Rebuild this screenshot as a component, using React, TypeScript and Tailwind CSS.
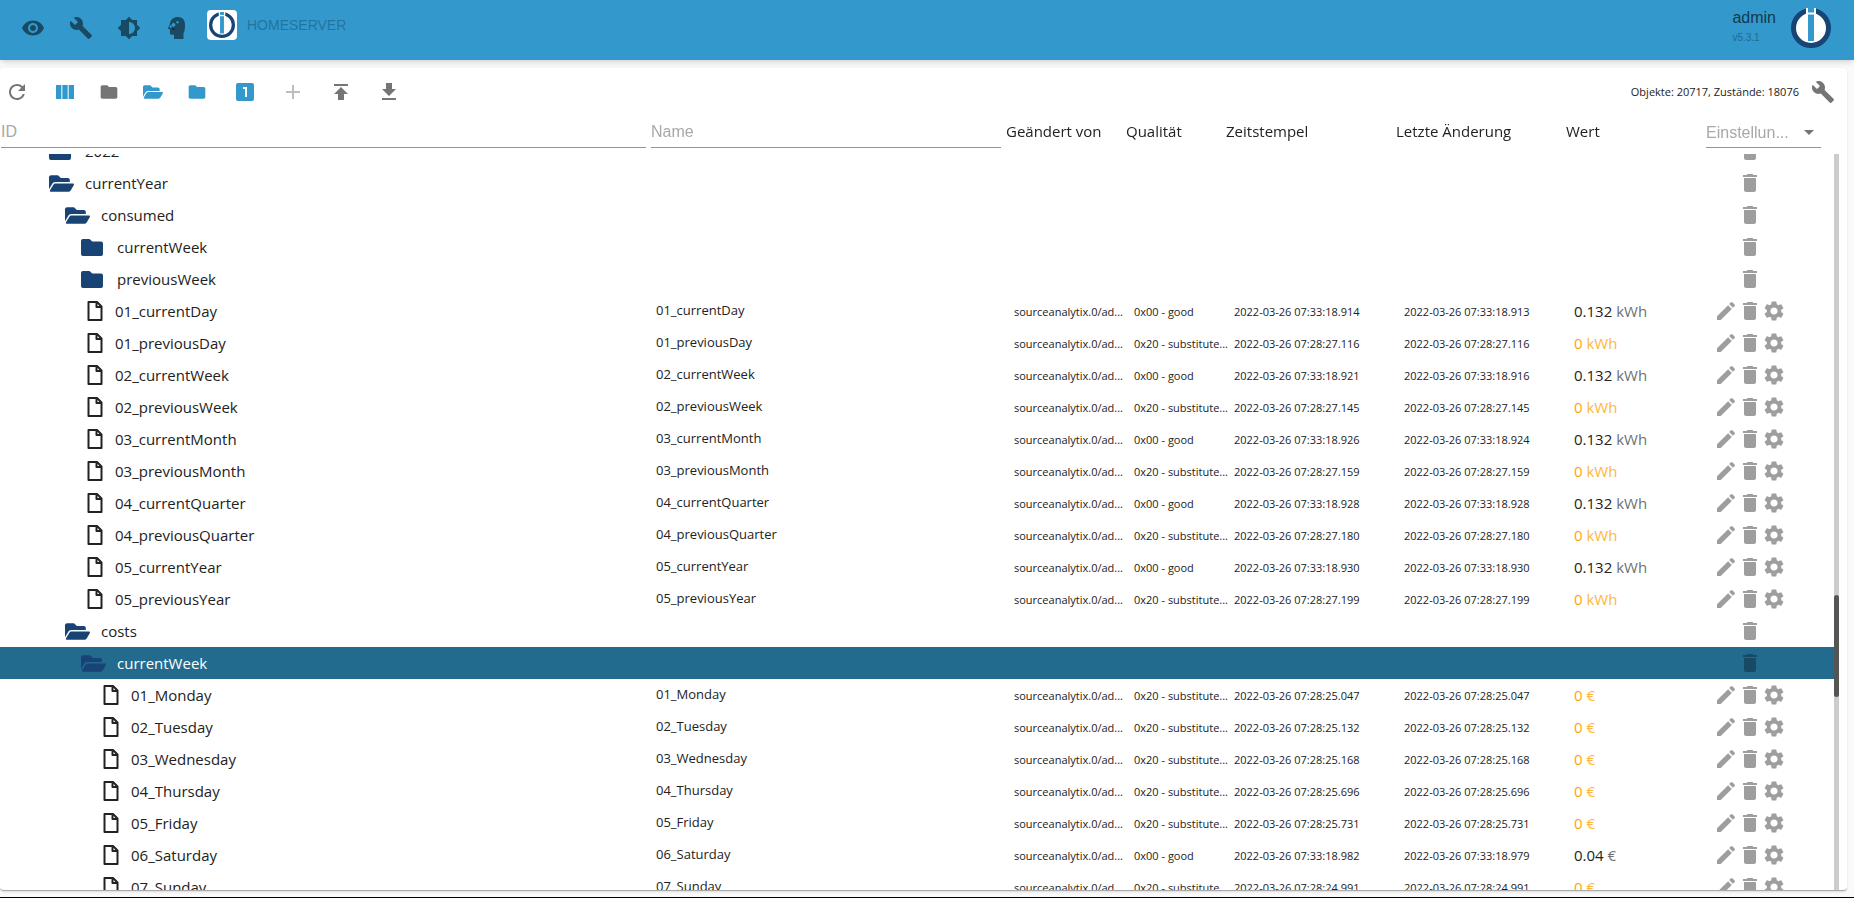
import { useLayoutEffect, useRef } from "react";
import {
  MdAdd,
  MdArrowDropDown,
  MdBrightness6,
  MdBuild,
  MdDelete,
  MdEdit,
  MdFolder,
  MdGetApp,
  MdLooksOne,
  MdPublish,
  MdRefresh,
  MdSettings,
  MdViewColumn,
  MdVisibility,
} from "react-icons/md";
import { FaFolderOpen } from "react-icons/fa";

type Row = {
  name: string;
  depth: number;
  kind: "open" | "closed" | "state";
  quality?: string;
  ts?: string;
  lc?: string;
  value?: string;
  unit?: string;
  selected?: boolean;
};

const open = (name: string, depth: number, selected = false): Row => ({ name, depth, kind: "open", selected });
const closed = (name: string, depth: number): Row => ({ name, depth, kind: "closed" });
const state = (name: string, depth: number, ts: string, lc: string, value: string, unit: string): Row => ({
  name,
  depth,
  kind: "state",
  quality: value === "0" ? "0x20 - substitute..." : "0x00 - good",
  ts: `2022-03-26 07:${ts}`,
  lc: `2022-03-26 07:${lc}`,
  value,
  unit,
});

const rows: Row[] = [
  closed("2022", 0),
  open("currentYear", 0),
  open("consumed", 1),
  closed("currentWeek", 2),
  closed("previousWeek", 2),
  state("01_currentDay", 2, "33:18.914", "33:18.913", "0.132", "kWh"),
  state("01_previousDay", 2, "28:27.116", "28:27.116", "0", "kWh"),
  state("02_currentWeek", 2, "33:18.921", "33:18.916", "0.132", "kWh"),
  state("02_previousWeek", 2, "28:27.145", "28:27.145", "0", "kWh"),
  state("03_currentMonth", 2, "33:18.926", "33:18.924", "0.132", "kWh"),
  state("03_previousMonth", 2, "28:27.159", "28:27.159", "0", "kWh"),
  state("04_currentQuarter", 2, "33:18.928", "33:18.928", "0.132", "kWh"),
  state("04_previousQuarter", 2, "28:27.180", "28:27.180", "0", "kWh"),
  state("05_currentYear", 2, "33:18.930", "33:18.930", "0.132", "kWh"),
  state("05_previousYear", 2, "28:27.199", "28:27.199", "0", "kWh"),
  open("costs", 1),
  open("currentWeek", 2, true),
  state("01_Monday", 3, "28:25.047", "28:25.047", "0", "€"),
  state("02_Tuesday", 3, "28:25.132", "28:25.132", "0", "€"),
  state("03_Wednesday", 3, "28:25.168", "28:25.168", "0", "€"),
  state("04_Thursday", 3, "28:25.696", "28:25.696", "0", "€"),
  state("05_Friday", 3, "28:25.731", "28:25.731", "0", "€"),
  state("06_Saturday", 3, "33:18.982", "33:18.979", "0.04", "€"),
  state("07_Sunday", 3, "28:24.991", "28:24.991", "0", "€"),
];

const indent = ["pl-[49px]", "pl-[65px]", "pl-[81px]", "pl-[97px]"];

function Logo({ className }: { className: string }) {
  return (
    <svg viewBox="0 0 40 40" className={className} aria-hidden>
      <circle cx="20" cy="20" r="17.5" fill="#fff" stroke="#174475" strokeWidth="5" />
      <rect x="15" y="0" width="10" height="34" fill="#fff" />
      <rect x="17" y="0" width="6" height="4.5" fill="#3399cc" />
      <rect x="17" y="6.5" width="6" height="26.5" fill="#3399cc" />
    </svg>
  );
}

function ExpertIcon() {
  return (
    <svg viewBox="0 0 24 24" className="size-6" fill="currentColor" aria-hidden>
      <path d="M13 1C8.500 1 5.500 3.500 5 7.500L3.200 12c-.3.800 0 1.200.8 1.200h1V17c0 1.200.6 1.800 1.800 1.800H9V23h9.500v-6c1.200-1.500 1.500-4 1.500-8.500C20 4 17.500 1 13 1z" />
      <g fill="#3399cc">
        <circle cx="8.500" cy="8.800" r="1.900" />
        <circle cx="12.500" cy="6.200" r="1.200" />
        <circle cx="5.800" cy="10.500" r="1.200" />
      </g>
      <circle cx="8.500" cy="13" r="1" fill="#0b2a3a" />
    </svg>
  );
}

function FileIcon() {
  return (
    <svg viewBox="0 0 16 20" className="h-5 w-4" fill="none" stroke="#222" strokeWidth="2" strokeLinejoin="round" aria-hidden>
      <path d="M1.500 1H10l4.500 4.500V19h-13z" />
      <path d="M9.500 1v5h5" />
    </svg>
  );
}

function RowIcon({ row }: { row: Row }) {
  if (row.kind === "state") return <FileIcon />;
  if (row.kind === "open") return <FaFolderOpen className="size-[25px]" color="#174475" />;
  return (
    <svg viewBox="0 0 22 17" className="h-[17px] w-[22px]" fill="#174475" aria-hidden>
      <path d="M2 0h6.500l2.800 2.500H20a2 2 0 0 1 2 2V15a2 2 0 0 1-2 2H2a2 2 0 0 1-2-2V2a2 2 0 0 1 2-2z" />
    </svg>
  );
}

const headers = ["Geändert von", "Qualität", "Zeitstempel", "Letzte Änderung", "Wert"];

export default function App() {
  const listRef = useRef<HTMLDivElement>(null);

  useLayoutEffect(() => {
    if (listRef.current) listRef.current.scrollTop = 19;
  }, []);

  return (
    <div className="flex h-screen flex-col border-b border-black bg-[#fafafa] font-['Open_Sans',sans-serif] text-[#222]">
      {/* App bar */}
      <header className="z-20 flex h-15 shrink-0 items-center bg-[#3399cc] pr-[23px] pb-1 pl-[21px] font-['Liberation_Sans',sans-serif] text-[#184a63] shadow-md">
        <nav className="flex items-center gap-6">
          <button aria-label="Sichtbarkeit"><MdVisibility className="size-6" /></button>
          <button aria-label="Einstellungen"><MdBuild className="size-6" /></button>
          <button aria-label="Farbschema"><MdBrightness6 className="size-6" /></button>
          <button aria-label="Expertenmodus"><ExpertIcon /></button>
        </nav>
        <div className="mb-1.5 ml-[18px] flex items-center gap-2.5">
          <span className="rounded-sm bg-white p-0.5">
            <Logo className="size-[26px]" />
          </span>
          <span className="text-sm text-[#2474a0]">HOMESERVER</span>
        </div>
        <div className="ml-auto flex items-center gap-[15px]">
          <div>
            <p className="text-base leading-5 text-[#123a4e]">admin</p>
            <p className="text-[10px] leading-5 text-[#1d6a93]">v5.3.1</p>
          </div>
          <Logo className="size-10" />
        </div>
      </header>

      <main className="mt-2 mr-[7px] mb-[6px] flex min-h-0 flex-1 flex-col rounded border-b border-[#aaa] bg-white shadow-sm">
        {/* Toolbar */}
        <div className="flex h-12 shrink-0 items-center px-[5px] text-[#757575]">
          <button aria-label="Aktualisieren" className="mr-6"><MdRefresh className="size-6" /></button>
          <button aria-label="Spalten" className="mr-[22px] text-[#3399cc]"><MdViewColumn className="size-6" /></button>
          <button aria-label="Alle zuklappen" className="mr-6"><MdFolder className="size-5" /></button>
          <button aria-label="Alle aufklappen" className="mr-6 text-[#3399cc]"><FaFolderOpen className="size-5" /></button>
          <button aria-label="Ordner" className="mr-[26px] text-[#3399cc]"><MdFolder className="size-5" /></button>
          <button aria-label="Nur Zustände" className="mr-6 text-[#3399cc]"><MdLooksOne className="size-6" /></button>
          <button aria-label="Hinzufügen" className="mr-6 text-[#bdbdbd]"><MdAdd className="size-6" /></button>
          <button aria-label="Importieren" className="mr-6"><MdPublish className="size-6" /></button>
          <button aria-label="Exportieren"><MdGetApp className="size-6" /></button>
          <p className="mr-3 ml-auto text-[11px] text-[#222]">Objekte: 20717, Zustände: 18076</p>
          <button aria-label="Werkzeuge" className="mr-[7px]"><MdBuild className="size-6" /></button>
        </div>

        {/* Object tree */}
        <div className="flex min-h-0 flex-1">
          <div ref={listRef} className="min-w-0 flex-1 overflow-y-auto [scrollbar-width:none]">
            <table className="w-full table-fixed border-collapse text-left">
              <colgroup>
                <col />
                <col className="w-[355px]" />
                <col className="w-[120px]" />
                <col className="w-[100px]" />
                <col className="w-[170px]" />
                <col className="w-[170px]" />
                <col className="w-[140px]" />
                <col className="w-[128px]" />
              </colgroup>
              <thead className="sticky top-0 z-10 bg-white text-[15px]">
                <tr className="h-[38px]">
                  <th className="pt-0 pr-[5px] pb-1.5 pl-px align-top font-normal">
                    <input
                      aria-label="ID"
                      placeholder="ID"
                      className="block h-8 w-full border-b border-[#949494] font-['Liberation_Sans',sans-serif] text-base outline-none placeholder:text-[#a8a8a8]"
                    />
                  </th>
                  <th className="pt-0 pr-[5px] pb-1.5 align-top font-normal">
                    <input
                      aria-label="Name"
                      placeholder="Name"
                      className="block h-8 w-full border-b border-[#949494] font-['Liberation_Sans',sans-serif] text-base outline-none placeholder:text-[#a8a8a8]"
                    />
                  </th>
                  {headers.map((h) => (
                    <th key={h} className="pt-1 align-top font-normal whitespace-nowrap">{h}</th>
                  ))}
                  <th className="pt-0 pr-[13px] pb-1.5 align-top font-normal">
                    <div className="relative">
                      <select
                        aria-label="Einstellungen"
                        className="block h-8 w-full appearance-none border-b border-[#949494] pt-0.5 font-['Liberation_Sans',sans-serif] text-base text-[#a8a8a8] outline-none"
                      >
                        <option>Einstellun...</option>
                      </select>
                      <MdArrowDropDown className="pointer-events-none absolute top-1 right-0 size-6 text-[#757575]" />
                    </div>
                  </th>
                </tr>
              </thead>
              <tbody>
                {rows.map((row, i) => (
                  <tr key={i} className={row.selected ? "h-8 bg-[#236b8e] text-white" : "h-8"}>
                    <td className="p-0">
                      <div className={`flex h-8 items-center text-[15px] ${indent[row.depth]}`}>
                        <span className={row.kind === "state" ? "mr-3 ml-1.5" : "w-9"}>
                          <RowIcon row={row} />
                        </span>
                        {row.name}
                      </div>
                    </td>
                    <td className="p-0 pl-[5px] text-[13px]">{row.kind === "state" && row.name}</td>
                    <td className="p-0 pt-0.5 pl-2 text-[11px] whitespace-nowrap">
                      {row.kind === "state" && "sourceanalytix.0/ad..."}
                    </td>
                    <td className="p-0 pt-0.5 pl-2 text-[11px] whitespace-nowrap">{row.quality}</td>
                    <td className="p-0 pt-0.5 pl-2 text-[11px] whitespace-nowrap">{row.ts}</td>
                    <td className="p-0 pt-0.5 pl-2 text-[11px] whitespace-nowrap">{row.lc}</td>
                    <td className={`p-0 pl-2 text-[15px] ${row.value === "0" ? "text-[#ffa500]" : ""}`}>
                      {row.value} <span className={row.value === "0" ? "opacity-80" : "opacity-65"}>{row.unit}</span>
                    </td>
                    <td className="p-0">
                      <div className={`flex items-center pl-2 ${row.selected ? "text-[#184a63]" : "text-[#9e9e9e]"}`}>
                        {row.kind === "state" ? (
                          <button aria-label="Bearbeiten" className="w-6"><MdEdit className="size-6" /></button>
                        ) : (
                          <span className="w-6" />
                        )}
                        <button aria-label="Löschen"><MdDelete className="size-6" /></button>
                        {row.kind === "state" && (
                          <button aria-label="Konfigurieren"><MdSettings className="size-6" /></button>
                        )}
                      </div>
                    </td>
                  </tr>
                ))}
              </tbody>
            </table>
          </div>
          <div className="mt-[38px] mr-2 w-[5px] bg-[#ccc] pt-[441px]">
            <div className="h-[102px] rounded-sm bg-[#555]" />
          </div>
        </div>
      </main>
    </div>
  );
}
